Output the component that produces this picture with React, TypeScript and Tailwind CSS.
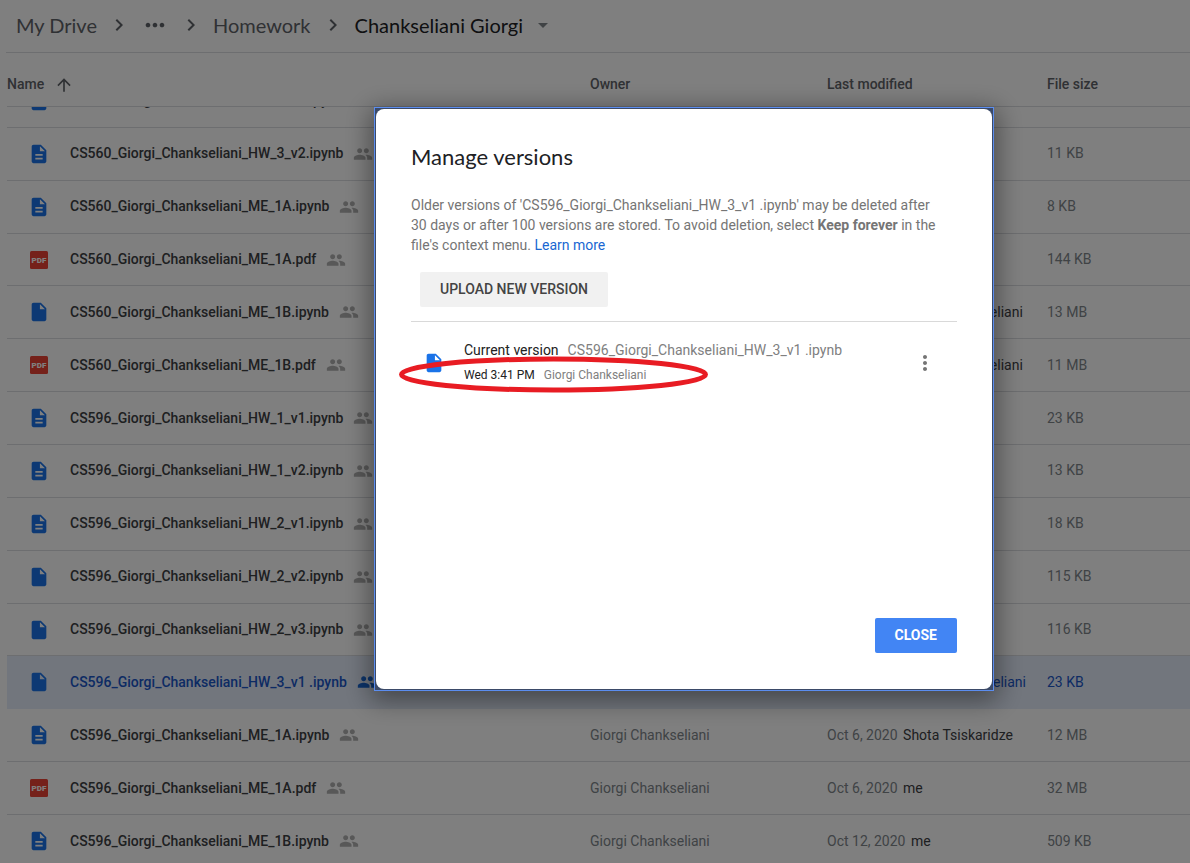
import { useLayoutEffect, useRef } from "react";
import {
  MdArrowDropDown,
  MdArrowUpward,
  MdChevronRight,
  MdDescription,
  MdInsertDriveFile,
  MdMoreHoriz,
  MdMoreVert,
  MdPeople,
} from "react-icons/md";

type FileKind = "doc" | "file" | "pdf";

interface DriveFile {
  name: string;
  kind: FileKind;
  date: string;
  by: string;
  size: string;
  selected?: boolean;
}

const OWNER = "Giorgi Chankseliani";

const files: DriveFile[] = [
  { name: "CS560_Giorgi_Chankseliani_HW_3_v1.ipynb", kind: "doc", date: "Oct 6, 2020", by: "me", size: "11 KB" },
  { name: "CS560_Giorgi_Chankseliani_HW_3_v2.ipynb", kind: "doc", date: "Oct 6, 2020", by: "me", size: "11 KB" },
  { name: "CS560_Giorgi_Chankseliani_ME_1A.ipynb", kind: "doc", date: "Oct 6, 2020", by: "me", size: "8 KB" },
  { name: "CS560_Giorgi_Chankseliani_ME_1A.pdf", kind: "pdf", date: "Oct 6, 2020", by: "me", size: "144 KB" },
  { name: "CS560_Giorgi_Chankseliani_ME_1B.ipynb", kind: "file", date: "Oct 6, 2020", by: OWNER, size: "13 MB" },
  { name: "CS560_Giorgi_Chankseliani_ME_1B.pdf", kind: "pdf", date: "Oct 6, 2020", by: OWNER, size: "11 MB" },
  { name: "CS596_Giorgi_Chankseliani_HW_1_v1.ipynb", kind: "doc", date: "Oct 6, 2020", by: "me", size: "23 KB" },
  { name: "CS596_Giorgi_Chankseliani_HW_1_v2.ipynb", kind: "doc", date: "Oct 6, 2020", by: "me", size: "13 KB" },
  { name: "CS596_Giorgi_Chankseliani_HW_2_v1.ipynb", kind: "doc", date: "Oct 6, 2020", by: "me", size: "18 KB" },
  { name: "CS596_Giorgi_Chankseliani_HW_2_v2.ipynb", kind: "file", date: "Oct 6, 2020", by: "me", size: "115 KB" },
  { name: "CS596_Giorgi_Chankseliani_HW_2_v3.ipynb", kind: "file", date: "Oct 6, 2020", by: "me", size: "116 KB" },
  { name: "CS596_Giorgi_Chankseliani_HW_3_v1 .ipynb", kind: "file", date: "Nov 4, 2020", by: OWNER, size: "23 KB", selected: true },
  { name: "CS596_Giorgi_Chankseliani_ME_1A.ipynb", kind: "doc", date: "Oct 6, 2020", by: "Shota Tsiskaridze", size: "12 MB" },
  { name: "CS596_Giorgi_Chankseliani_ME_1A.pdf", kind: "pdf", date: "Oct 6, 2020", by: "me", size: "32 MB" },
  { name: "CS596_Giorgi_Chankseliani_ME_1B.ipynb", kind: "doc", date: "Oct 12, 2020", by: "me", size: "509 KB" },
];

function FileIcon({ kind }: { kind: FileKind }) {
  if (kind === "pdf") {
    return (
      <svg viewBox="0 0 18 18" className="size-[18px]" aria-hidden="true">
        <rect width="18" height="18" rx="1.5" fill="#ea4335" />
        <text x="9" y="12" textAnchor="middle" fontSize="8" fontWeight="900" fill="#fff">
          PDF
        </text>
      </svg>
    );
  }
  return kind === "doc" ? (
    <MdDescription className="size-[22px] text-[#1a73e8]" />
  ) : (
    <MdInsertDriveFile className="size-[22px] text-[#1a73e8]" />
  );
}

function Breadcrumbs() {
  return (
    <nav
      aria-label="Breadcrumb"
      className="ml-[6px] flex h-[53px] shrink-0 items-center border-b border-[#dadce0] pb-0.5 pl-[10px] font-['Lato',sans-serif] text-[20px] text-[#5f6368]"
    >
      <a href="#my-drive">My Drive</a>
      <MdChevronRight className="mx-[10px] size-6" />
      <button type="button" aria-label="Show path">
        <MdMoreHoriz className="size-7" />
      </button>
      <MdChevronRight className="mx-[10px] size-6" />
      <a href="#homework">Homework</a>
      <MdChevronRight className="mx-[10px] size-6" />
      <button type="button" className="flex items-center gap-2 text-[#202124]">
        Chankseliani Giorgi
        <MdArrowDropDown className="size-6 text-[#80868b]" />
      </button>
    </nav>
  );
}

function FileList() {
  const scroller = useRef<HTMLDivElement>(null);

  useLayoutEffect(() => {
    if (scroller.current) scroller.current.scrollTop = 32;
  }, []);

  return (
    <div ref={scroller} className="min-h-0 flex-1 overflow-y-auto pl-[7px] [scrollbar-width:none]">
      <table className="h-[847px] w-full table-fixed border-separate border-spacing-0 text-left text-[14px] whitespace-nowrap">
        <colgroup>
          <col />
          <col className="w-[237px]" />
          <col className="w-[220px]" />
          <col className="w-[143px]" />
        </colgroup>
        <thead className="text-[#5f6368]">
          <tr className="h-[54px] [&>th]:sticky [&>th]:top-0 [&>th]:z-10 [&>th]:border-b [&>th]:border-[#dadce0] [&>th]:bg-white [&>th]:p-0 [&>th]:pt-2.5 [&>th]:font-medium">
            <th scope="col">
              <span className="flex items-center gap-2.5">
                Name
                <MdArrowUpward className="size-5" />
              </span>
            </th>
            <th scope="col">Owner</th>
            <th scope="col">Last modified</th>
            <th scope="col">File size</th>
          </tr>
        </thead>
        <tbody>
          {files.map((file) => (
            <tr
              key={file.name}
              className={
                file.selected
                  ? "bg-[#e4ecfa] text-[#1a56c8] [&>td]:border-b [&>td]:border-[#e4ecfa] [&>td]:p-0"
                  : "text-[#80868b] [&>td]:border-b [&>td]:border-[#dadce0] [&>td]:p-0"
              }
            >
              <td>
                <span className="flex h-6 items-center">
                  <span className="ml-5 mr-[19px] flex w-6 justify-center">
                    <FileIcon kind={file.kind} />
                  </span>
                  <span className={file.selected ? "font-medium" : "font-medium text-[#3c4043]"}>{file.name}</span>
                  <MdPeople
                    className={file.selected ? "ml-2.5 size-5 shrink-0 text-[#1967d2]" : "ml-2.5 size-5 shrink-0 text-[#b0b0b0]"}
                  />
                </span>
              </td>
              <td>{OWNER}</td>
              <td>
                {file.date}{" "}
                <span className={file.selected ? "ml-0.5" : "ml-0.5 text-[#3c4043]"}>{file.by}</span>
              </td>
              <td>{file.size}</td>
            </tr>
          ))}
        </tbody>
      </table>
    </div>
  );
}

function ManageVersions() {
  return (
    <div className="fixed inset-0 z-20 flex items-start justify-center bg-black/50 pt-[107px] pl-[178px]">
      <div className="border border-[#5b8def] bg-[#3b4a68] p-px shadow-[0_6px_24px_4px_rgba(0,0,0,0.4)]">
        <section
          role="dialog"
          aria-modal="true"
          aria-labelledby="versions-title"
          className="flex min-h-[580px] w-[616px] flex-col rounded-lg bg-white px-[35px] pt-8 pb-9"
        >
          <h1 id="versions-title" className="font-['Lato',sans-serif] text-[22px] leading-8 text-[#202124]">
            Manage versions
          </h1>
          <p className="mt-[22px] pr-3 text-[14px] leading-5 text-[#757575]">
            Older versions of 'CS596_Giorgi_Chankseliani_HW_3_v1 .ipynb' may be deleted after 30 days or after 100
            versions are stored. To avoid deletion, select <b>Keep forever</b> in the file's context menu.{" "}
            <a href="#learn-more" className="text-[#1967d2]">
              Learn more
            </a>
          </p>
          <button
            type="button"
            className="mt-[17px] ml-[9px] h-[35px] self-start rounded-xs bg-[#f1f1f1] px-5 text-[14px] font-medium text-[#444]"
          >
            UPLOAD NEW VERSION
          </button>
          <div className="relative mt-[14px] flex items-center border-t border-[#d9d9d9] pt-4 pl-3">
            <MdInsertDriveFile className="size-[22px] text-[#1a73e8]" />
            <div className="ml-[19px] flex-1">
              <p className="text-[14px] leading-[25px] text-[#808080]">
                <span className="mr-[9px] text-[#222]">Current version</span>
                CS596_Giorgi_Chankseliani_HW_3_v1 .ipynb
              </p>
              <p className="text-[12px] leading-[25px] text-[#808080]">
                <span className="mr-[9px] text-[#222]">Wed 3:41 PM</span>
                Giorgi Chankseliani
              </p>
            </div>
            <button type="button" aria-label="More actions" className="mr-5">
              <MdMoreVert className="size-6 text-[#757575]" />
            </button>
            <svg
              viewBox="0 0 310 38"
              className="pointer-events-none absolute top-[34px] -left-3 h-[38px] w-[310px]"
              aria-hidden="true"
            >
              <ellipse cx="154.5" cy="18.5" rx="152" ry="15.5" fill="none" stroke="#e81c23" strokeWidth="5" />
            </svg>
          </div>
          <button
            type="button"
            className="mt-auto h-[35px] self-end rounded-xs bg-[#4285f4] px-5 text-[14px] font-bold text-white"
          >
            CLOSE
          </button>
        </section>
      </div>
    </div>
  );
}

export default function App() {
  return (
    <main className="flex h-screen flex-col overflow-hidden bg-white font-['Roboto',sans-serif]">
      <Breadcrumbs />
      <FileList />
      <ManageVersions />
    </main>
  );
}
